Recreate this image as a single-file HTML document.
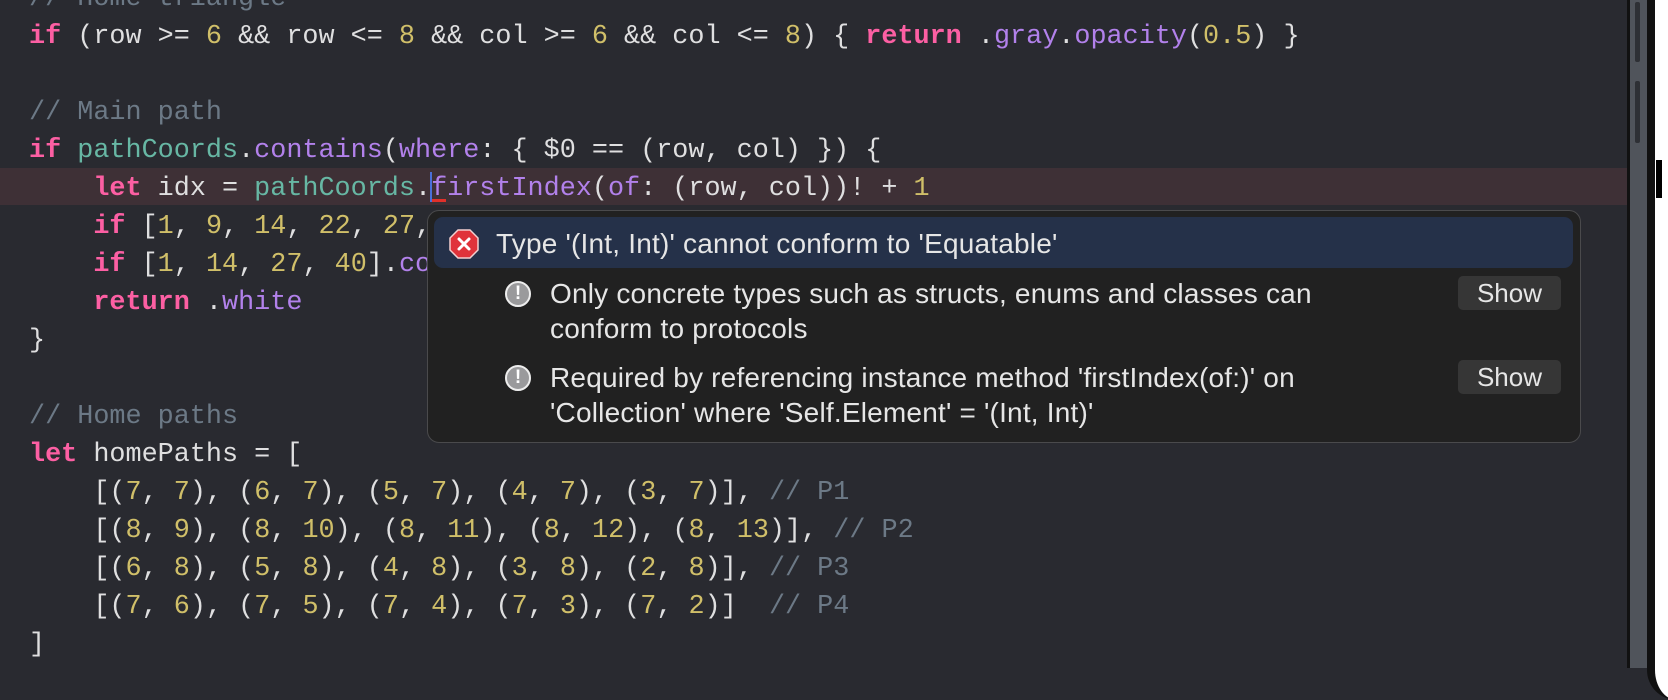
<!DOCTYPE html>
<html><head><meta charset="utf-8"><style>
html,body{margin:0;padding:0}
body{width:1668px;height:668px;background:#292a30;position:relative;overflow:hidden;font-family:"Liberation Mono",monospace}
.l{position:absolute;left:29px;height:38px;line-height:38px;font-size:26.8px;white-space:pre;color:#dfdfe0;margin-top:2px}
.k{color:#fc5fa3;font-weight:bold}.n{color:#d0bf69}.c{color:#6c7986}.t{color:#67b7a4}.m{color:#b281eb}
#hl{position:absolute;left:0;top:168px;width:1627px;height:37px;background:#3e3036}
#pop{position:absolute;left:427px;top:210px;width:1152px;height:231px;background:#212121;border:1.5px solid #4a4a4c;border-radius:12px;font-family:"Liberation Sans",sans-serif;color:#e6e6e6}
#blue{position:absolute;left:6px;top:6px;right:7px;height:51px;background:#253149;border-radius:9px}
.tx{position:absolute;font-size:28px;letter-spacing:0.2px;white-space:pre;line-height:35px}
.btn{position:absolute;left:1030px;width:103px;height:34px;background:#363636;border-radius:5px;font-size:26px;line-height:34px;text-align:center;color:#e6e6e6}
.wi{position:absolute;width:26px;height:26px;border-radius:50%;background:#9a9a9c;border:2px solid #eee;box-sizing:border-box;color:#fff;font-weight:bold;font-size:19px;line-height:22px;text-align:center}
#right{position:absolute;left:1627px;top:0;width:41px;height:668px;background:#50545b}
</style></head><body>
<div id="hl"></div>
<div class="l c" style="top:-22px">// Home triangle</div>
<div class="l" style="top:16px"><span class="k">if</span> (row &gt;= <span class="n">6</span> &amp;&amp; row &lt;= <span class="n">8</span> &amp;&amp; col &gt;= <span class="n">6</span> &amp;&amp; col &lt;= <span class="n">8</span>) { <span class="k">return</span> .<span class="m">gray</span>.<span class="m">opacity</span>(<span class="n">0.5</span>) }</div>
<div class="l c" style="top:92px">// Main path</div>
<div class="l" style="top:130px"><span class="k">if</span> <span class="t">pathCoords</span>.<span class="m">contains</span>(<span class="m">where</span>: { $0 == (row, col) }) {</div>
<div class="l" style="top:168px">    <span class="k">let</span> idx = <span class="t">pathCoords</span>.<span class="m">firstIndex</span>(<span class="m">of</span>: (row, col))! + <span class="n">1</span></div>
<div style="position:absolute;left:430px;top:172px;width:2px;height:30px;background:#4a6fd8"></div>
<div style="position:absolute;left:432px;top:199px;width:14px;height:3px;background:#e0302a"></div>
<div class="l" style="top:206px">    <span class="k">if</span> [<span class="n">1</span>, <span class="n">9</span>, <span class="n">14</span>, <span class="n">22</span>, <span class="n">27</span>, <span class="n">35</span>, <span class="n">40</span>, <span class="n">48</span>].<span class="m">contains</span>(idx) { <span class="k">return</span> .<span class="m">green</span> }</div>
<div class="l" style="top:244px">    <span class="k">if</span> [<span class="n">1</span>, <span class="n">14</span>, <span class="n">27</span>, <span class="n">40</span>].<span class="m">contains</span>(idx) { <span class="k">return</span> .<span class="m">red</span> }</div>
<div class="l" style="top:282px">    <span class="k">return</span> .<span class="m">white</span></div>
<div class="l" style="top:320px">}</div>
<div class="l c" style="top:396px">// Home paths</div>
<div class="l" style="top:434px"><span class="k">let</span> homePaths = [</div>
<div class="l" style="top:472px">    [(<span class="n">7</span>, <span class="n">7</span>), (<span class="n">6</span>, <span class="n">7</span>), (<span class="n">5</span>, <span class="n">7</span>), (<span class="n">4</span>, <span class="n">7</span>), (<span class="n">3</span>, <span class="n">7</span>)], <span class="c">// P1</span></div>
<div class="l" style="top:510px">    [(<span class="n">8</span>, <span class="n">9</span>), (<span class="n">8</span>, <span class="n">10</span>), (<span class="n">8</span>, <span class="n">11</span>), (<span class="n">8</span>, <span class="n">12</span>), (<span class="n">8</span>, <span class="n">13</span>)], <span class="c">// P2</span></div>
<div class="l" style="top:548px">    [(<span class="n">6</span>, <span class="n">8</span>), (<span class="n">5</span>, <span class="n">8</span>), (<span class="n">4</span>, <span class="n">8</span>), (<span class="n">3</span>, <span class="n">8</span>), (<span class="n">2</span>, <span class="n">8</span>)], <span class="c">// P3</span></div>
<div class="l" style="top:586px">    [(<span class="n">7</span>, <span class="n">6</span>), (<span class="n">7</span>, <span class="n">5</span>), (<span class="n">7</span>, <span class="n">4</span>), (<span class="n">7</span>, <span class="n">3</span>), (<span class="n">7</span>, <span class="n">2</span>)]  <span class="c">// P4</span></div>
<div class="l" style="top:624px">]</div>

<div id="pop">
 <div id="blue"></div>
 <svg style="position:absolute;left:21px;top:18px" width="30" height="30" viewBox="0 0 30 30">
  <polygon points="9,1 21,1 29,9 29,21 21,29 9,29 1,21 1,9" fill="#e0333a" stroke="#f3d0d0" stroke-width="1.5"/>
  <path d="M10 10 L20 20 M20 10 L10 20" stroke="#fff" stroke-width="3" stroke-linecap="round"/>
 </svg>
 <div class="tx" style="left:68px;top:15px">Type '(Int, Int)' cannot conform to 'Equatable'</div>
 <div class="wi" style="left:77px;top:70px">!</div>
 <div class="tx" style="left:122px;top:65px">Only concrete types such as structs, enums and classes can
conform to protocols</div>
 <div class="btn" style="top:65px">Show</div>
 <div class="wi" style="left:77px;top:154px">!</div>
 <div class="tx" style="left:122px;top:149px">Required by referencing instance method 'firstIndex(of:)' on
'Collection' where 'Self.Element' = '(Int, Int)'</div>
 <div class="btn" style="top:149px">Show</div>
</div>

<div id="right">
 <div style="position:absolute;left:0;top:0;width:3px;height:668px;background:#111"></div>
 <div style="position:absolute;left:8px;top:2px;width:5px;height:60px;background:#2e3035;border-radius:2px"></div>
 <div style="position:absolute;left:8px;top:81px;width:5px;height:62px;background:#2e3035;border-radius:2px"></div>
 <div style="position:absolute;left:20px;top:-40px;width:40px;height:740px;border-left:8px solid #111;border-radius:0 0 0 30px;background:#fff;box-sizing:border-box"></div>
 <div style="position:absolute;left:29px;top:160px;width:6px;height:38px;background:#000"></div>
</div>
</body></html>
